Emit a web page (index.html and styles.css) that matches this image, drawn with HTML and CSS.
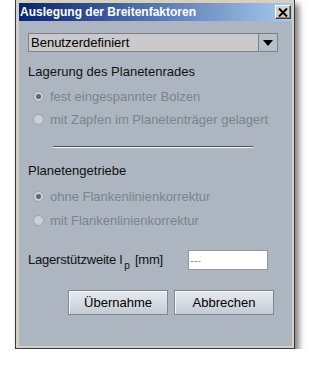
FILE: index.html
```html
<!DOCTYPE html>
<html lang="de">
  <head>
    <meta charset="UTF-8" />
    <title>Auslegung der Breitenfaktoren</title>
    <link rel="stylesheet" href="styles.css">
  </head>
  <body>
    <div class="window">
      <div class="titlebar">
        <span class="title">Auslegung der Breitenfaktoren</span>
        <span class="closeBtn">
          <svg width="10" height="9" viewBox="0 0 10 9">
            <path d="M1 0.5 L9 8.5 M9 0.5 L1 8.5" stroke="#000" stroke-width="2" />
          </svg>
        </span>
      </div>
      <div class="content">
        <div class="combo">
          <span class="comboText">Benutzerdefiniert</span>
          <span class="comboArrow">
            <svg width="10" height="6" viewBox="0 0 10 6">
              <path d="M0 0 H10 L5 6 Z" fill="#000" />
            </svg>
          </span>
        </div>

        <div class="label groupLabel">Lagerung des Planetenrades</div>
        <div class="radioGroup">
          <div class="radio"><span class="dot checked"></span>fest eingespannter Bolzen</div>
          <div class="radio"><span class="dot"></span>mit Zapfen im Planetenträger gelagert</div>
        </div>

        <div class="separator"></div>

        <div class="label groupLabel second">Planetengetriebe</div>
        <div class="radioGroup">
          <div class="radio wide"><span class="dot checked"></span>ohne Flankenlinienkorrektur</div>
          <div class="radio wide"><span class="dot"></span>mit Flankenlinienkorrektur</div>
        </div>

        <div class="fieldRow">
          <span class="label fieldLabel">Lagerstützweite l<sub>p</sub> [mm]</span>
          <span class="textField">---</span>
        </div>

        <div class="buttonRow">
          <button class="btn">Übernahme</button>
          <button class="btn">Abbrechen</button>
        </div>
      </div>
    </div>
  </body>
</html>
```

FILE: styles.css
```css
body {
  margin: 0;
  background-color: #fff;
  font-family: "Liberation Sans", Arial, sans-serif;
  font-size: 13px;
}
.window {
  margin: -1px 0 0 15px;
  width: 280px;
  height: 350px;
  box-sizing: border-box;
  border: 1px solid #3a3a3a;
  background-color: #d4d0c8;
  padding: 3px 2px 2px 3px;
  display: flex;
  flex-direction: column;
  box-shadow: 4px 5px 6px rgba(0, 0, 0, 0.5);
}
.titlebar {
  height: 18px;
  display: flex;
  align-items: center;
  justify-content: space-between;
  padding: 0 1px 0 1px;
  background: linear-gradient(to right, #0a246a, #a6caf0);
  color: #fff;
}
.title {
  font-weight: bold;
  font-size: 12px;
}
.closeBtn {
  width: 16px;
  height: 14px;
  box-sizing: border-box;
  background-color: #d4d0c8;
  border: 1px solid;
  border-color: #fff #404040 #404040 #fff;
  box-shadow: inset -1px -1px 0 #808080;
  display: flex;
  align-items: center;
  justify-content: center;
}
.content {
  flex: 1;
  background-color: #adb6c0;
  padding: 12px 0 0 9px;
}
.combo {
  width: 250px;
  height: 19px;
  box-sizing: border-box;
  border: 1px solid #7a838c;
  display: flex;
  background-color: #cacaca;
}
.comboText {
  flex: 1;
  line-height: 17px;
  padding-left: 2px;
  color: #000;
}
.comboArrow {
  width: 18px;
  border-left: 1px solid #7a838c;
  background-color: #b7c0c9;
  display: flex;
  align-items: center;
  justify-content: center;
}
.label {
  color: #111;
}
.groupLabel {
  margin-top: 11px;
  height: 18px;
  line-height: 18px;
}
.groupLabel.second {
  margin-top: 14px;
}
.radioGroup {
  margin-top: 4px;
}
.radio {
  height: 23px;
  display: flex;
  align-items: center;
  color: #7b838c;
  padding-left: 5px;
}
.radio.wide {
  height: 24px;
}
.dot {
  width: 11px;
  height: 11px;
  box-sizing: border-box;
  border-radius: 50%;
  border: 1px solid #9ba3ab;
  background-color: #c9cfd5;
  margin-right: 6px;
  position: relative;
}
.dot.checked::after {
  content: "";
  position: absolute;
  left: 2px;
  top: 2px;
  width: 5px;
  height: 5px;
  border-radius: 50%;
  background-color: #5f656c;
}
.separator {
  margin: 15px 0 0 25px;
  width: 200px;
  height: 1px;
  background-color: #4e5256;
  border-bottom: 1px solid #f4f6f8;
}
.fieldRow {
  margin-top: 18px;
  height: 20px;
  display: flex;
  align-items: center;
}
.fieldLabel {
  width: 160px;
  position: relative;
  top: -1px;
  letter-spacing: -0.2px;
}
.fieldLabel sub {
  font-size: 10px;
  vertical-align: -5px;
  line-height: 0;
  margin: 0 2px 0 2px;
}
.textField {
  width: 80px;
  height: 20px;
  box-sizing: border-box;
  border: 1px solid #8f979f;
  background-color: #fff;
  color: #8a8a8a;
  font-size: 11px;
  line-height: 18px;
  padding-left: 1px;
}
.buttonRow {
  margin: 20px 0 0 40px;
  display: flex;
  gap: 6px;
}
.btn {
  width: 100px;
  height: 25px;
  box-sizing: border-box;
  border: 1px solid #7f8790;
  box-shadow: inset 1px 1px 0 #f6f8fa;
  background: linear-gradient(to bottom, #e6ebf0, #c3cbd3);
  font-family: "Liberation Sans", Arial, sans-serif;
  font-size: 13px;
  color: #000;
  padding: 0;
}
```
